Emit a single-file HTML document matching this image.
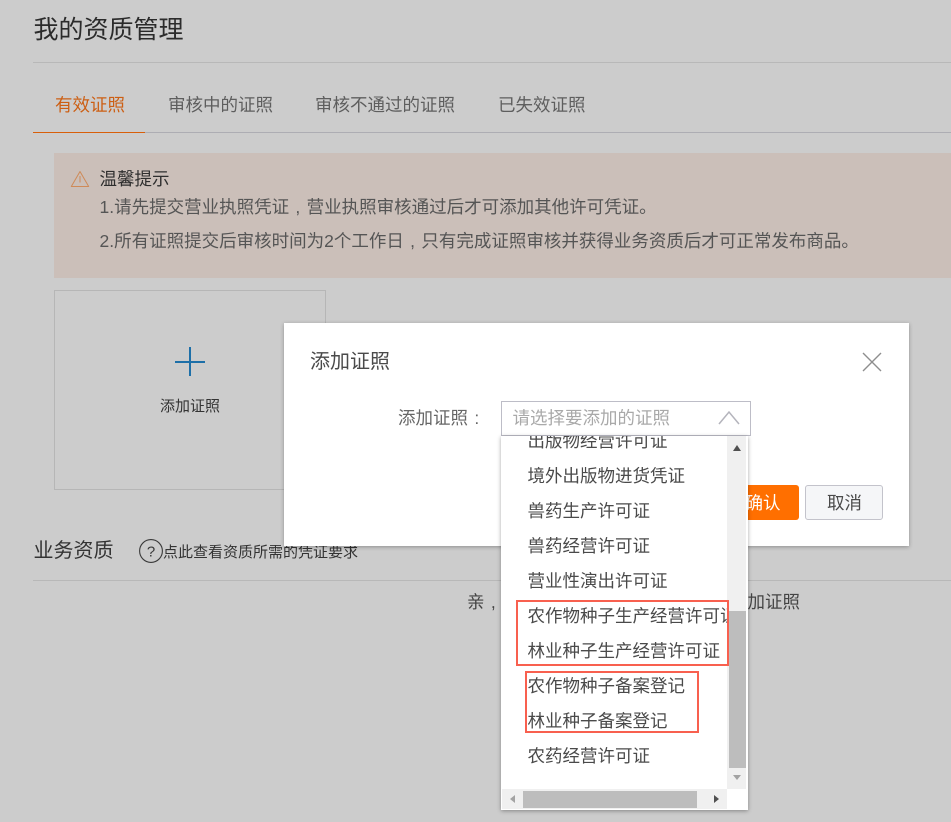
<!DOCTYPE html>
<html lang="zh">
<head>
<meta charset="utf-8">
<style>
html,body{margin:0;padding:0;}
body{width:951px;height:822px;position:relative;overflow:hidden;background:#cccccc;font-family:"Liberation Sans","Noto Sans CJK SC",sans-serif;}
.a{position:absolute;white-space:nowrap;}
.t{font-size:17.5px;line-height:24px;}
.item{position:absolute;left:25.5px;font-size:17.5px;line-height:24px;color:#4a4a4a;white-space:nowrap;}
.p{display:inline-block;width:1em;text-align:center;}
</style>
</head>
<body>
<div class="a" style="left:33.5px;top:13px;font-size:25px;line-height:34px;color:#2b2b2b;">我的资质管理</div>
<div class="a" style="left:33px;top:62px;width:918px;height:1px;background:#b8b8b8;"></div>

<div class="a" style="left:33px;top:132px;width:918px;height:1px;background:#adadb3;"></div>
<div class="a" style="left:33px;top:132px;width:112px;height:1px;background:#d85f0a;"></div>
<div class="a t" style="left:55px;top:93px;color:#cc5f14;">有效证照</div>
<div class="a t" style="left:168px;top:93px;color:#5e5e5e;">审核中的证照</div>
<div class="a t" style="left:315px;top:93px;color:#5e5e5e;">审核不通过的证照</div>
<div class="a t" style="left:498px;top:93px;color:#5e5e5e;">已失效证照</div>

<div class="a" style="left:54px;top:153px;width:897px;height:125px;background:#cbbfb9;"></div>
<svg class="a" style="left:70px;top:170px;" width="20" height="18" viewBox="0 0 20 18"><path d="M10 1.5 L18.7 16.5 H1.3 Z" fill="none" stroke="#cf8a58" stroke-width="1" stroke-linejoin="round"/><path d="M10 6 V12.5" stroke="#cf8a58" stroke-width="1"/></svg>
<div class="a t" style="left:99.5px;top:167px;color:#2e2e2e;">温馨提示</div>
<div class="a t" style="left:99.5px;top:195px;color:#555;">1.请先提交营业执照凭证<span class="p">,</span>营业执照审核通过后才可添加其他许可凭证。</div>
<div class="a t" style="left:99.5px;top:229px;color:#555;">2.所有证照提交后审核时间为2个工作日<span class="p">,</span>只有完成证照审核并获得业务资质后才可正常发布商品。</div>

<div class="a" style="left:54px;top:290px;width:270px;height:198px;border:1px solid #b6b6b6;"></div>
<div class="a" style="left:175px;top:361px;width:30px;height:2px;background:#1d6fa8;"></div>
<div class="a" style="left:189px;top:347px;width:2px;height:29px;background:#1d6fa8;"></div>
<div class="a" style="left:160px;top:396px;font-size:15px;line-height:22px;color:#333;">添加证照</div>

<div class="a" style="left:33.5px;top:537px;font-size:20px;line-height:28px;color:#333;">业务资质</div>
<svg class="a" style="left:138px;top:538px;" width="26" height="26" viewBox="0 0 26 26"><circle cx="13" cy="13" r="11.4" fill="none" stroke="#3a3a3a" stroke-width="1.1"/><text x="13" y="18.5" text-anchor="middle" font-size="15" fill="#3a3a3a" font-family="Liberation Sans">?</text></svg>
<div class="a" style="left:163px;top:542px;font-size:15px;line-height:22px;color:#333;">点此查看资质所需的凭证要求</div>
<div class="a" style="left:33px;top:580px;width:918px;height:1px;background:#b8b8b8;"></div>
<div class="a t" style="left:467px;top:590px;color:#444;">亲<span class="p">,</span></div>
<div class="a t" style="left:747.5px;top:590px;color:#444;">加证照</div>

<!-- modal -->
<div class="a" style="left:284px;top:323px;width:625px;height:223px;background:#fff;box-shadow:0 1px 4px rgba(0,0,0,.3);"></div>
<div class="a" style="left:310px;top:348px;font-size:20px;line-height:28px;color:#4a4a4a;">添加证照</div>
<svg class="a" style="left:861px;top:351px;" width="22" height="22" viewBox="0 0 22 22"><path d="M2 2 L20 20 M20 2 L2 20" stroke="#8e8e8e" stroke-width="1.4" fill="none"/></svg>
<div class="a t" style="left:398px;top:406px;color:#666;">添加证照<span class="p">:</span></div>
<div class="a" style="left:501px;top:401px;width:248px;height:33px;border:1px solid #bdbdc7;background:#fff;"></div>
<div class="a t" style="left:512.5px;top:406px;color:#a9a9a9;">请选择要添加的证照</div>
<svg class="a" style="left:717px;top:409px;" width="24" height="18" viewBox="0 0 24 18"><path d="M2 15 L12 3 L22 15" fill="none" stroke="#b4b4bc" stroke-width="1.5"/></svg>

<div class="a" style="left:700px;top:485px;width:99px;height:35px;background:#ff6f00;border-radius:3px;"></div>
<div class="a t" style="left:745.5px;top:491px;color:#fff;">确认</div>
<div class="a" style="left:805px;top:485px;width:76px;height:33px;background:#f5f6f8;border:1px solid #c3c3cb;border-radius:3px;"></div>
<div class="a t" style="left:827px;top:491px;color:#4a4a4a;">取消</div>

<!-- dropdown -->
<div class="a" style="left:501px;top:436px;width:247px;height:374px;background:#fff;box-shadow:0 1px 4px rgba(0,0,0,.35);"></div>
<div class="a" style="left:502px;top:436px;width:225px;height:353px;overflow:hidden;">
  <div class="item" style="top:-7px;">出版物经营许可证</div>
  <div class="item" style="top:28px;">境外出版物进货凭证</div>
  <div class="item" style="top:63px;">兽药生产许可证</div>
  <div class="item" style="top:98px;">兽药经营许可证</div>
  <div class="item" style="top:133px;">营业性演出许可证</div>
  <div class="item" style="top:168px;">农作物种子生产经营许可证</div>
  <div class="item" style="top:203px;">林业种子生产经营许可证</div>
  <div class="item" style="top:238px;">农作物种子备案登记</div>
  <div class="item" style="top:273px;">林业种子备案登记</div>
  <div class="item" style="top:308px;">农药经营许可证</div>
</div>
<!-- vertical scrollbar -->
<div class="a" style="left:727px;top:436px;width:19px;height:353px;background:#f0f0f0;"></div>
<div class="a" style="left:729px;top:611px;width:17px;height:157px;background:#bdbdbd;"></div>
<div class="a" style="left:733px;top:445px;width:0;height:0;border-left:4.5px solid transparent;border-right:4.5px solid transparent;border-bottom:6px solid #505050;"></div>
<div class="a" style="left:733px;top:775px;width:0;height:0;border-left:4.5px solid transparent;border-right:4.5px solid transparent;border-top:5px solid #a3a3a3;"></div>
<!-- horizontal scrollbar -->
<div class="a" style="left:502px;top:789px;width:225px;height:20px;background:#f0f0f0;"></div>
<div class="a" style="left:523px;top:791px;width:174px;height:17px;background:#bdbdbd;"></div>
<div class="a" style="left:510px;top:795px;width:0;height:0;border-top:4.5px solid transparent;border-bottom:4.5px solid transparent;border-right:5px solid #a3a3a3;"></div>
<div class="a" style="left:714px;top:795px;width:0;height:0;border-top:4.5px solid transparent;border-bottom:4.5px solid transparent;border-left:5px solid #505050;"></div>

<!-- red annotation boxes -->
<div class="a" style="left:516px;top:600px;width:209px;height:62px;border:2px solid #f8604f;"></div>
<div class="a" style="left:525px;top:671px;width:170px;height:58px;border:2px solid #f8604f;"></div>
</body>
</html>
